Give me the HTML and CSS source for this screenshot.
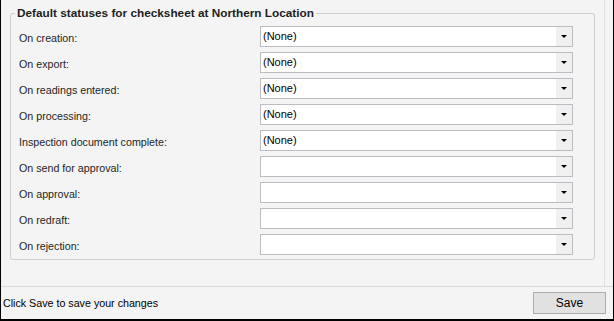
FILE: index.html
```html
<!DOCTYPE html>
<html lang="en">
<head>
  <meta charset="UTF-8">
  <title>Default statuses</title>
  <link rel="stylesheet" href="styles.css">
</head>
<body>
  <div class="window">
    <div class="main">
      <fieldset class="group">
        <legend>Default statuses for checksheet at Northern Location</legend>
        <div class="rows">
          <label>On creation:</label>
          <div class="combo"><span class="value">(None)</span><span class="drop"><i class="arrow"></i></span></div>
          <label>On export:</label>
          <div class="combo"><span class="value">(None)</span><span class="drop"><i class="arrow"></i></span></div>
          <label>On readings entered:</label>
          <div class="combo"><span class="value">(None)</span><span class="drop"><i class="arrow"></i></span></div>
          <label>On processing:</label>
          <div class="combo"><span class="value">(None)</span><span class="drop"><i class="arrow"></i></span></div>
          <label>Inspection document complete:</label>
          <div class="combo"><span class="value">(None)</span><span class="drop"><i class="arrow"></i></span></div>
          <label>On send for approval:</label>
          <div class="combo"><span class="value"></span><span class="drop"><i class="arrow"></i></span></div>
          <label>On approval:</label>
          <div class="combo"><span class="value"></span><span class="drop"><i class="arrow"></i></span></div>
          <label>On redraft:</label>
          <div class="combo"><span class="value"></span><span class="drop"><i class="arrow"></i></span></div>
          <label>On rejection:</label>
          <div class="combo"><span class="value"></span><span class="drop"><i class="arrow"></i></span></div>
        </div>
      </fieldset>
    </div>
    <div class="footer">
      <span class="hint">Click Save to save your changes</span>
      <button class="save">Save</button>
    </div>
  </div>
</body>
</html>
```

FILE: styles.css
```css
* {
  margin: 0;
  padding: 0;
  box-sizing: border-box;
  font-family: "Liberation Sans", Arial, sans-serif;
}
html, body {
  width: 614px;
  height: 321px;
  overflow: hidden;
}
body {
  background-color: #f4f4f4;
  color: #000;
  font-size: 10.7px;
}
.window {
  height: 321px;
  display: flex;
  flex-direction: column;
  border-left: 1px solid #000;
  border-right: 1px solid #000;
  border-bottom: 2px solid #000;
}
.main {
  height: 286px;
  margin-right: 8px;
  padding: 6px 9px 0 9px;
  border-right: 1px solid #e2e2e2;
}
.group {
  border: 1px solid #cfcfcf;
  border-radius: 3px;
  padding: 6px 21px 4px 8px;
  min-inline-size: 0;
}
.group legend {
  margin-left: -4px;
  padding: 0 2px;
  font-weight: bold;
  font-size: 11.8px;
  line-height: 14px;
  color: #1e1e1e;
}
.rows {
  display: grid;
  grid-template-columns: 241px 1fr;
  row-gap: 5px;
  align-items: center;
}
.rows label {
  padding-top: 3px;
  color: #1e1e1e;
}
.combo {
  display: flex;
  height: 21px;
  border: 1px solid #bcbcc2;
  background-color: #fff;
}
.combo .value {
  flex: 1;
  padding-left: 2px;
  line-height: 19px;
  font-size: 11px;
}
.combo .drop {
  width: 16px;
  background-color: #f0f0f0;
  display: flex;
  align-items: center;
  justify-content: center;
}
.arrow {
  width: 0;
  height: 0;
  border-left: 3px solid transparent;
  border-right: 3px solid transparent;
  border-top: 3px solid #000;
}
.footer {
  flex: 1;
  display: flex;
  align-items: center;
  justify-content: space-between;
  padding: 0 7px 0 2px;
  border-top: 1px solid #dadada;
}
.save {
  width: 73px;
  height: 22px;
  background-color: #e1e1e1;
  border: 1px solid #adadad;
  font-size: 12px;
  color: #000;
}
```
